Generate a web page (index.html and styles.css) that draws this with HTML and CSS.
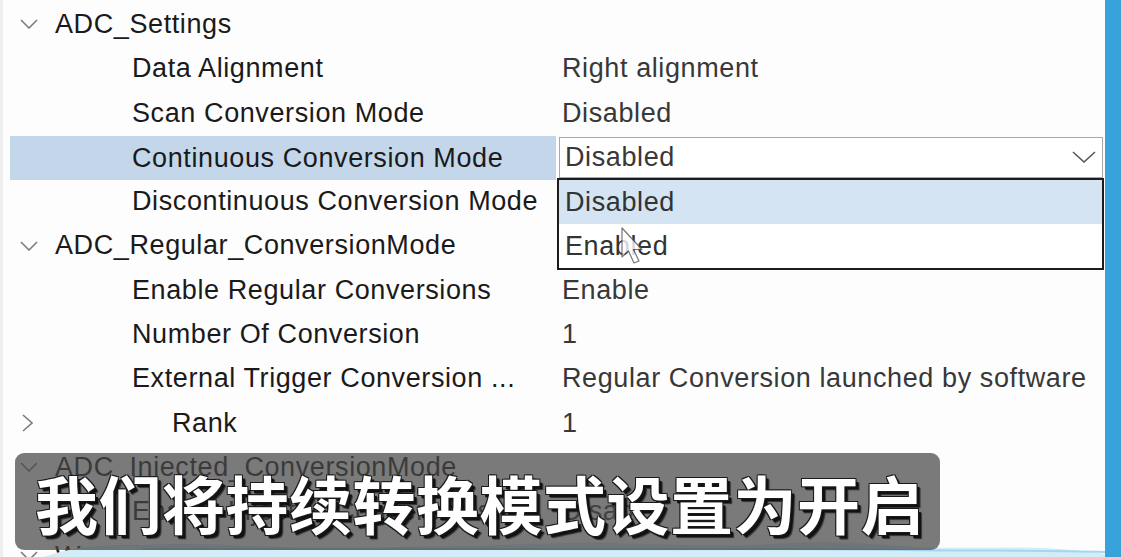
FILE: index.html
```html
<!DOCTYPE html>
<html lang="zh-CN">
<head>
	<meta charset="UTF-8">
	<title>ADC Parameter Settings</title>
	<link rel="stylesheet" href="styles.css">
</head>
<body>
	<div class="screen">
		<div class="panel">
			<div class="tree">
				<div class="row group">
					<div class="name"><svg class="twisty" viewBox="0 0 18 10"><polyline points="1,1 9,9 17,1"/></svg>ADC_Settings</div>
					<div class="value"></div>
				</div>
				<div class="row">
					<div class="name">Data Alignment</div>
					<div class="value">Right alignment</div>
				</div>
				<div class="row">
					<div class="name">Scan Conversion Mode</div>
					<div class="value">Disabled</div>
				</div>
				<div class="row selected">
					<div class="name">Continuous Conversion Mode</div>
					<div class="value">
						<div class="combo">
							<span>Disabled</span>
							<svg class="combo-arrow" viewBox="0 0 24 12"><polyline points="1,1 12,11 23,1"/></svg>
							<div class="options">
								<div class="option active">Disabled</div>
								<div class="option">Enabled</div>
								<!-- mouse pointer over the list -->
								<svg class="pointer" viewBox="0 0 22 37"><path d="M1 1 L1 30 L7.5 24 L13 36 L18 34 L12.5 22.5 L21 22.5 Z"/></svg>
							</div>
						</div>
					</div>
				</div>
				<div class="row">
					<div class="name">Discontinuous Conversion Mode</div>
					<div class="value"></div>
				</div>
				<div class="row group">
					<div class="name"><svg class="twisty" viewBox="0 0 18 10"><polyline points="1,1 9,9 17,1"/></svg>ADC_Regular_ConversionMode</div>
					<div class="value"></div>
				</div>
				<div class="row">
					<div class="name">Enable Regular Conversions</div>
					<div class="value">Enable</div>
				</div>
				<div class="row">
					<div class="name">Number Of Conversion</div>
					<div class="value">1</div>
				</div>
				<div class="row">
					<div class="name">External Trigger Conversion ...</div>
					<div class="value">Regular Conversion launched by software</div>
				</div>
				<div class="row sub">
					<div class="name"><svg class="twisty-right" viewBox="0 0 11 18"><polyline points="1,1 10,9 1,17"/></svg>Rank</div>
					<div class="value">1</div>
				</div>
				<div class="row group">
					<div class="name"><svg class="twisty" viewBox="0 0 18 10"><polyline points="1,1 9,9 17,1"/></svg>ADC_Injected_ConversionMode</div>
					<div class="value"></div>
				</div>
				<div class="row">
					<div class="name">Enable Injected Conversions</div>
					<div class="value">Disable</div>
				</div>
				<div class="row group">
					<div class="name"><svg class="twisty" viewBox="0 0 18 10"><polyline points="1,1 9,9 17,1"/></svg>WatchDog</div>
					<div class="value"></div>
				</div>
			</div>

			<svg class="wave" viewBox="0 0 1105 20" preserveAspectRatio="none">
				<path class="wave-back" d="M40 20 C 70 10, 100 7, 140 8 C 180 6, 210 7, 250 9 C 320 12, 390 10, 460 9 C 520 8, 560 5, 610 6 C 670 8, 730 10, 790 6 C 830 4, 860 6, 900 9 C 960 13, 1000 9, 1045 11 C 1075 13, 1095 15, 1105 17 L1105 20 Z"/>
				<path class="wave-line" d="M140 12 C 260 13, 380 11, 520 12 C 640 13, 760 11, 900 13 C 980 14, 1050 13, 1105 15"/>
			</svg>

			<div class="caption">我们将持续转换模式设置为开启</div>
		</div>
		<div class="scrollbar"></div>
	</div>
</body>
</html>
```

FILE: styles.css
```css
body {
	margin: 0;
	padding: 0;
	background-color: #fdfdfd;
}

.screen {
	display: flex;
	width: 1121px;
	height: 557px;
	overflow: hidden;
}

.panel {
	position: relative;
	flex: 1;
	border-left: 3px solid #eeeeee;
	background-color: #fdfdfd;
	overflow: hidden;
}

.scrollbar {
	width: 16px;
	background-color: #38a3db;
}

/* property tree */
.tree {
	padding-top: 2px;
	padding-left: 7px;
	font-family: "Liberation Sans", Arial, sans-serif;
	font-size: 27px;
	letter-spacing: 0.6px;
}

.row {
	display: grid;
	grid-template-columns: 546px 1fr;
	height: 44.3px;
	line-height: 44.3px;
}

.name {
	display: flex;
	align-items: center;
	padding-left: 122px;
	color: #1a1a1a;
	white-space: nowrap;
}
.group .name {
	padding-left: 10px;
}
.sub .name {
	padding-left: 12px;
}

.value {
	position: relative;
	padding-left: 6px;
	color: #383838;
	white-space: nowrap;
}

.twisty {
	width: 18px;
	height: 10px;
	margin-right: 17px;
}
.twisty-right {
	width: 11px;
	height: 18px;
	margin-right: 139px;
}
.twisty polyline,
.twisty-right polyline {
	fill: none;
	stroke: #7d7d7d;
	stroke-width: 1.6;
}

.selected .name {
	margin: 1px 0;
	background-color: #c4d6ea;
}

/* combobox with opened list */
.combo {
	position: relative;
	display: flex;
	align-items: center;
	justify-content: space-between;
	height: 39px;
	margin: 2px 2px 0 -3px;
	padding: 0 6px 0 5px;
	border: 1px solid #a8a8a8;
	background-color: #fff;
	line-height: 39px;
}
.combo-arrow {
	width: 24px;
	height: 12px;
}
.combo-arrow polyline {
	fill: none;
	stroke: #5a5a5a;
	stroke-width: 1.6;
}

.options {
	position: absolute;
	top: calc(100% + 1px);
	left: -3px;
	right: -2px;
	border: 2px solid #1c1c1c;
	background-color: #fff;
	z-index: 2;
}
.option {
	height: 44px;
	padding-left: 6px;
	line-height: 44px;
	color: #333;
}
.option.active {
	background-color: #d5e4f3;
}

.pointer {
	position: absolute;
	left: 62px;
	top: 47px;
	width: 22px;
	height: 37px;
	opacity: 0.8;
}
.pointer path {
	fill: #fff;
	stroke: #555;
	stroke-width: 1.2;
	stroke-linejoin: round;
}

/* bottom cloud strip */
.wave {
	position: absolute;
	left: 0;
	bottom: 0;
	width: 100%;
	height: 20px;
	z-index: 3;
}
.wave-back {
	fill: #d2ecf8;
}
.wave-line {
	fill: none;
	stroke: #a6d6ee;
	stroke-width: 2;
}

/* subtitle */
.caption {
	position: absolute;
	left: 12px;
	top: 453px;
	width: 925px;
	height: 97px;
	display: flex;
	align-items: center;
	padding-left: 20px;
	box-sizing: border-box;
	border-radius: 9px;
	background-color: rgba(70, 70, 70, 0.72);
	color: #fff;
	font-family: "Noto Sans CJK SC", sans-serif;
	font-size: 63px;
	font-weight: 700;
	letter-spacing: 0.5px;
	text-shadow: -1px -1px 0 #1a1a1a, 1px -1px 0 #1a1a1a, -1px 1px 0 #1a1a1a, 1px 1px 0 #1a1a1a, 3px 3px 0 #111, 4px 4px 1px rgba(0, 0, 0, .6);
	z-index: 4;
}
```
